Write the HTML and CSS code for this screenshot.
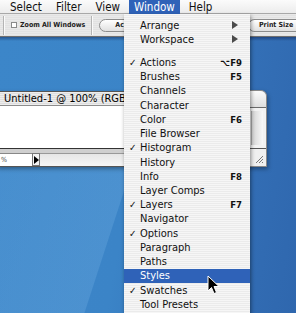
FILE: index.html
```html
<!DOCTYPE html>
<html>
<head>
<meta charset="utf-8">
<link rel="stylesheet" href="styles.css">
</head>
<body>
<div class="screen">
  <div class="menubar">
    <span class="mb-item mb-select">Select</span>
    <span class="mb-item">Filter</span>
    <span class="mb-item">View</span>
    <span class="mb-item mb-active">Window</span>
    <span class="mb-item">Help</span>
  </div>
  <div class="toolbar">
    <span class="tb-sep"></span>
    <span class="tb-check"></span>
    <span class="tb-label">Zoom All Windows</span>
    <span class="tb-sep tb-sep2"></span>
    <span class="tb-btn tb-actual">Actual Pixels</span>
    <span class="tb-btn tb-fit">Fit Screen</span>
    <span class="tb-btn tb-print">Print Size</span>
  </div>
  <div class="desktop">
    <div class="swoosh"></div>
  </div>

  <div class="docwin">
    <div class="doc-title">Untitled-1 @ 100% (RGB/8)</div>
    <div class="doc-canvas"></div>
    <div class="doc-status">
      <span class="doc-zoom">%</span>
      <span class="doc-arrow"></span>
      <span class="doc-scroll"></span>
    </div>
  </div>

  <div class="sidewin">
    <div class="side-title"></div>
    <div class="side-body"><div class="side-inner"></div></div>
    <div class="side-foot">
      <svg class="grip" width="10" height="10" viewBox="0 0 10 10">
        <path d="M2 9 L9 2 M5 9 L9 5 M8 9 L9 8" stroke="#777" stroke-width="1"/>
      </svg>
    </div>
  </div>

  <div class="menu">
    <div class="row"><span class="chk"></span><span class="lbl">Arrange</span><span class="sub"></span></div>
    <div class="row"><span class="chk"></span><span class="lbl">Workspace</span><span class="sub"></span></div>
    <div class="sep"></div>
    <div class="row"><span class="chk">✓</span><span class="lbl">Actions</span><span class="key">⌥F9</span></div>
    <div class="row"><span class="chk"></span><span class="lbl">Brushes</span><span class="key">F5</span></div>
    <div class="row"><span class="chk"></span><span class="lbl">Channels</span><span class="key"></span></div>
    <div class="row"><span class="chk"></span><span class="lbl">Character</span><span class="key"></span></div>
    <div class="row"><span class="chk"></span><span class="lbl">Color</span><span class="key">F6</span></div>
    <div class="row"><span class="chk"></span><span class="lbl">File Browser</span><span class="key"></span></div>
    <div class="row"><span class="chk">✓</span><span class="lbl">Histogram</span><span class="key"></span></div>
    <div class="row"><span class="chk"></span><span class="lbl">History</span><span class="key"></span></div>
    <div class="row"><span class="chk"></span><span class="lbl">Info</span><span class="key">F8</span></div>
    <div class="row"><span class="chk"></span><span class="lbl">Layer Comps</span><span class="key"></span></div>
    <div class="row"><span class="chk">✓</span><span class="lbl">Layers</span><span class="key">F7</span></div>
    <div class="row"><span class="chk"></span><span class="lbl">Navigator</span><span class="key"></span></div>
    <div class="row"><span class="chk">✓</span><span class="lbl">Options</span><span class="key"></span></div>
    <div class="row"><span class="chk"></span><span class="lbl">Paragraph</span><span class="key"></span></div>
    <div class="row"><span class="chk"></span><span class="lbl">Paths</span><span class="key"></span></div>
    <div class="row row-hi"><span class="chk"></span><span class="lbl">Styles</span><span class="key"></span></div>
    <div class="row"><span class="chk">✓</span><span class="lbl">Swatches</span><span class="key"></span></div>
    <div class="row"><span class="chk"></span><span class="lbl">Tool Presets</span><span class="key"></span></div>
  </div>

  <svg class="cursor" width="13" height="20" viewBox="0 0 13 20">
    <path d="M1 1 L1 16 L4.5 12.5 L7 18.5 L9.5 17.5 L7 11.5 L12 11.5 Z" fill="#000" stroke="#fff" stroke-width="1"/>
  </svg>
</div>
</body>
</html>
```

FILE: styles.css
```css
* { box-sizing: border-box; }
html, body { margin: 0; padding: 0; }
body {
  width: 296px;
  height: 313px;
  overflow: hidden;
  font-family: "DejaVu Sans Condensed", "DejaVu Sans", sans-serif;
  color: #000;
  background: #3a7fc2;
}
.screen {
  position: relative;
  width: 296px;
  height: 313px;
  display: flex;
  flex-direction: column;
  overflow: hidden;
}

/* menu bar */
.menubar {
  height: 14px;
  flex: none;
  display: flex;
  align-items: stretch;
  gap: 4px;
  background: linear-gradient(#fbfbfb, #ececec);
  border-bottom: 1px solid #a8a8a8;
  font-size: 11.5px;
  line-height: 14px;
  color: #111;
}
.mb-item { padding: 0 5px; white-space: nowrap; }
.mb-select { margin-left: 5px; }
.mb-active {
  background: #2f62b8;
  color: #fff;
  height: 15px;
}

/* toolbar */
.toolbar {
  height: 23px;
  flex: none;
  display: flex;
  align-items: center;
  background: repeating-linear-gradient(#e9e9e9 0 1px, #e2e2e2 1px 2px);
  border-bottom: 1px solid #6f6f6f;
  white-space: nowrap;
}
.toolbar > * { flex: none; }
.tb-sep {
  width: 2px;
  height: 19px;
  margin-left: 3px;
  border-left: 1px solid #b4b4b4;
  border-right: 1px solid #fafafa;
}
.tb-sep2 { margin-left: 6px; }
.tb-check {
  width: 6px;
  height: 6px;
  margin-left: 6px;
  background: #fff;
  border: 1px solid #8a8a8a;
}
.tb-label {
  margin-left: 3px;
  font-size: 7px;
  font-weight: bold;
  color: #222;
}
.tb-btn {
  height: 13px;
  border: 1px solid #8c8c8c;
  border-radius: 7px;
  background: linear-gradient(#ffffff, #e0e0e0);
  font-size: 7px;
  font-weight: bold;
  color: #222;
  line-height: 11px;
  padding: 0 8px;
  overflow: hidden;
}
.tb-actual { margin-left: 6px; padding-left: 15px; width: 72px; }
.toolbar > .tb-fit { margin-left: 4px; flex: 1; min-width: 0; }
.tb-print { margin-left: 8px; padding-left: 10px; padding-right: 0; width: 48px; border-radius: 7px 0 0 7px; border-right: 0; }

/* desktop */
.desktop {
  flex: 1;
  position: relative;
  background:
    linear-gradient(180deg, rgba(0,0,40,0.35) 0, rgba(0,0,40,0) 4px),
    linear-gradient(100deg, #3c86c9 0%, #3b84c7 45%, #336fb6 75%, #2f67ae 100%);
  overflow: hidden;
}
.swoosh {
  position: absolute;
  left: -60px;
  top: 128px;
  width: 160px;
  height: 200px;
  background: linear-gradient(90deg, rgba(120,180,230,0.18), rgba(120,180,230,0.28));
  transform: skewX(-18deg);
}

/* document window */
.docwin {
  position: absolute;
  left: -2px;
  top: 91px;
  width: 150px;
  height: 76px;
  display: flex;
  flex-direction: column;
  background: #d8d8d8;
  border: 1px solid #555;
  box-shadow: 0 2px 4px rgba(0,0,0,0.35);
}
.doc-title {
  height: 14px;
  flex: none;
  padding-left: 5px;
  font-size: 11px;
  line-height: 14px;
  white-space: nowrap;
  background: repeating-linear-gradient(#ededed 0 1px, #dedede 1px 2px);
  border-bottom: 1px solid #8d8d8d;
}
.doc-canvas {
  flex: 1;
  background: #fff;
  border-bottom: 1px solid #333;
}
.doc-status {
  height: 17px;
  flex: none;
  display: flex;
  align-items: flex-end;
  background: #cfcfcf;
  padding-top: 3px;
}
.doc-zoom {
  width: 33px;
  height: 13px;
  background: #fff;
  border-top: 1px solid #888;
  font-size: 7px;
  line-height: 12px;
  padding-left: 2px;
  color: #444;
}
.doc-arrow {
  position: relative;
  width: 8px;
  height: 13px;
  background: #f4f4f4;
  border: 1px solid #777;
}
.doc-arrow::after {
  content: "";
  position: absolute;
  left: 1px;
  top: 2px;
  border-left: 5px solid #000;
  border-top: 4px solid transparent;
  border-bottom: 4px solid transparent;
}
.doc-scroll {
  flex: 1;
  height: 13px;
  background: linear-gradient(#e6e6e6, #f6f6f6);
  border-top: 1px solid #999;
}

/* side window */
.sidewin {
  position: absolute;
  left: 200px;
  top: 90px;
  width: 67px;
  height: 77px;
  display: flex;
  flex-direction: column;
  background: #dcdcdc;
  border: 1px solid #8a8a8a;
  border-radius: 0 6px 0 0;
  box-shadow: 1px 2px 4px rgba(0,0,0,0.35);
}
.side-title {
  height: 17px;
  flex: none;
  border-radius: 0 6px 0 0;
  background: linear-gradient(#fbfbfb, #dedede);
  border-bottom: 1px solid #6a6a6a;
}
.side-body {
  flex: 1;
  display: flex;
  justify-content: flex-end;
  background: #f2f2f2;
  border-bottom: 1px solid #555;
}
.side-inner {
  width: 12px;
  margin: 3px 3px 3px 0;
  background: linear-gradient(90deg, #d4d4d4, #f8f8f8);
  border-left: 1px solid #aaa;
}
.side-foot {
  height: 17px;
  flex: none;
  display: flex;
  justify-content: flex-end;
  align-items: flex-end;
  background: #f0f0f0;
}
.grip { margin: 0 2px 2px 0; }

/* dropdown menu */
.menu {
  position: absolute;
  left: 124px;
  top: 14px;
  width: 126px;
  height: 310px;
  padding-top: 4px;
  background: repeating-linear-gradient(#f6f6f6 0 1px, #ebebeb 1px 2px);
  box-shadow: 1px 2px 4px rgba(0,0,0,0.45);
  font-size: 11px;
  color: #111;
}
.row {
  height: 14.24px;
  display: flex;
  align-items: center;
  padding-right: 8px;
  white-space: nowrap;
}
.chk {
  width: 16px;
  flex: none;
  padding-left: 5px;
  font-size: 10px;
}
.lbl { flex: 1; }
.key { font-size: 9.5px; font-weight: bold; }
.sub {
  width: 0;
  height: 0;
  margin-right: 4px;
  border-left: 6px solid #4a4a4a;
  border-top: 4px solid transparent;
  border-bottom: 4px solid transparent;
}
.sep { height: 8.8px; }
.row-hi {
  background: #2f62b8;
  color: #fff;
}

.cursor {
  position: absolute;
  left: 207px;
  top: 275px;
}
```
